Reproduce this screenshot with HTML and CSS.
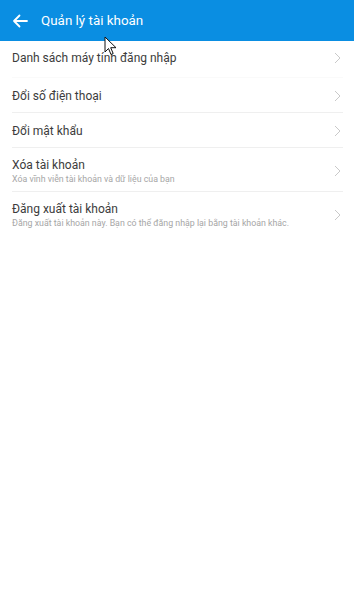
FILE: index.html
```html
<!DOCTYPE html>
<html lang="vi">
<head>
<meta charset="utf-8">
<title>Quản lý tài khoản</title>
<link rel="stylesheet" href="styles.css">
</head>
<body>
<div class="app">
  <header class="topbar">
    <svg class="back" width="16" height="14" viewBox="0 0 16 14"><path d="M15 7H2M7.5 1.5 2 7l5.5 5.5" fill="none" stroke="#fff" stroke-width="1.8" stroke-linecap="round" stroke-linejoin="round"/></svg>
    <span class="title">Quản lý tài khoản</span>
  </header>
  <ul class="list">
    <li class="row first">
      <div class="text"><div class="label">Danh sách máy tính đăng nhập</div></div>
      <svg class="chev" width="7" height="12" viewBox="0 0 7 12"><path d="M1 1l5 5-5 5" fill="none" stroke="#c9c9c9" stroke-width="1"/></svg>
    </li>
    <li class="row">
      <div class="text"><div class="label">Đổi số điện thoại</div></div>
      <svg class="chev" width="7" height="12" viewBox="0 0 7 12"><path d="M1 1l5 5-5 5" fill="none" stroke="#c9c9c9" stroke-width="1"/></svg>
    </li>
    <li class="row">
      <div class="text"><div class="label">Đổi mật khẩu</div></div>
      <svg class="chev" width="7" height="12" viewBox="0 0 7 12"><path d="M1 1l5 5-5 5" fill="none" stroke="#c9c9c9" stroke-width="1"/></svg>
    </li>
    <li class="row tall">
      <div class="text"><div class="label">Xóa tài khoản</div><div class="sub">Xóa vĩnh viễn tài khoản và dữ liệu của bạn</div></div>
      <svg class="chev" width="7" height="12" viewBox="0 0 7 12"><path d="M1 1l5 5-5 5" fill="none" stroke="#c9c9c9" stroke-width="1"/></svg>
    </li>
    <li class="row tall">
      <div class="text"><div class="label">Đăng xuất tài khoản</div><div class="sub">Đăng xuất tài khoản này. Bạn có thể đăng nhập lại bằng tài khoản khác.</div></div>
      <svg class="chev" width="7" height="12" viewBox="0 0 7 12"><path d="M1 1l5 5-5 5" fill="none" stroke="#c9c9c9" stroke-width="1"/></svg>
    </li>
  </ul>
  <svg class="cursor" width="14" height="20" viewBox="0 0 14 20"><path d="M1 1v15l3.5-3.5 2.5 6 2.2-1-2.5-5.8H12z" fill="#fff" stroke="#111" stroke-width="1" stroke-linejoin="round"/></svg>
</div>
</body>
</html>
```
FILE: styles.css
```css
html, body { margin: 0; padding: 0; background: #fff; }
body { font-family: Roboto, "Noto Sans", Arial, sans-serif; }
.app { position: relative; width: 354px; min-height: 601px; }
.topbar {
  height: 41px;
  background: #0a8ee2;
  display: flex;
  align-items: center;
  padding-left: 12px;
  box-sizing: border-box;
}
.back { flex: none; }
.title { color: #fff; font-size: 13.4px; margin-left: 13px; }
.list { list-style: none; margin: 0; padding: 0 11px 0 12px; }
.row {
  display: flex;
  align-items: center;
  height: 35px;
  padding-top: 2px;
  border-bottom: 1px solid #efefef;
  box-sizing: border-box;
}
.row.first { height: 37px; padding-top: 0; padding-bottom: 2px; border-bottom-color: #fafafa; }
.row.tall { height: 44px; }
.row:last-child { border-bottom: none; }
.text { flex: 1; min-width: 0; }
.label { font-size: 12px; color: #3c3c3c; line-height: 16px; }
.sub { font-size: 8.8px; color: #a6a6a6; line-height: 12px; }
.chev { flex: none; margin-right: 2px; }
.cursor { position: absolute; left: 104px; top: 36px; }
```
